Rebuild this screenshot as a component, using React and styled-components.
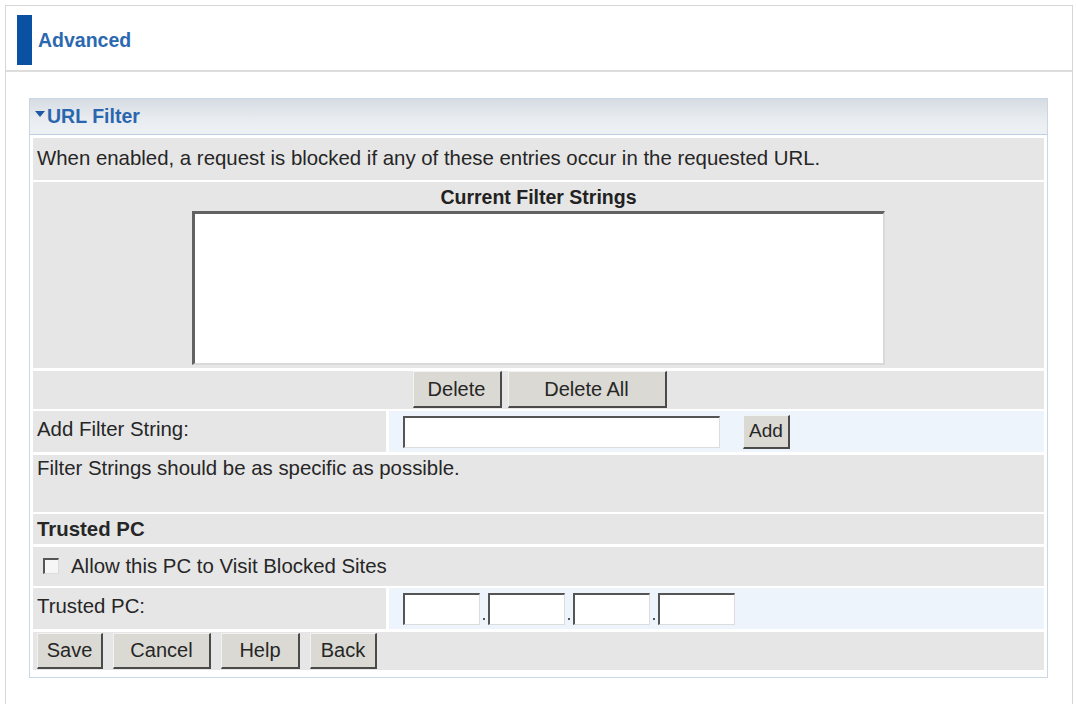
import React from "react";
import styled, { createGlobalStyle } from "styled-components";

const GlobalStyle = createGlobalStyle`
  html, body { margin: 0; padding: 0; background: #ffffff; overflow: hidden; }
  body { font-family: "Liberation Sans", Arial, sans-serif; color: #262626; }
  * { box-sizing: border-box; }
`;

const Frame = styled.div`
  margin: 5px 0 0 5px;
  width: 1068px;
  height: 710px;
  border: 1px solid #d6d6d6;
  background: #fff;
`;

const TitleBar = styled.div`
  display: flex;
  align-items: center;
  padding: 9px 0 5px 11px;
  border-bottom: 2px solid #dddddd;
`;

const TitleMark = styled.div`
  width: 15px;
  height: 50px;
  background: #0b51a3;
`;

const TitleText = styled.span`
  margin-left: 6px;
  font-size: 19.5px;
  font-weight: bold;
  color: #2b68b0;
`;

const Panel = styled.section`
  margin: 26px 0 0 23px;
  width: 1019px;
  border: 1px solid #c9d7e5;
`;

const PanelHeader = styled.div`
  display: flex;
  align-items: center;
  height: 36px;
  padding-left: 4px;
  background: linear-gradient(#d6dce3, #e9edf1 60%, #eef1f4);
  border-bottom: 1px solid #bdd0e3;
  font-size: 19.5px;
  font-weight: bold;
  color: #2a66ae;
`;

const Caret = styled.span`
  width: 0;
  height: 0;
  margin: 0 2px 0 1px;
  border-left: 5px solid transparent;
  border-right: 5px solid transparent;
  border-top: 6px solid #1d59a2;
  position: relative;
  top: -3px;
`;

const PanelBody = styled.div`
  display: flex;
  flex-direction: column;
  gap: 2.5px;
  padding: 2.5px 3px 7px 3px;
`;

const Row = styled.div`
  display: flex;
  align-items: ${(p) => p.$align || "center"};
  justify-content: ${(p) => p.$justify || "flex-start"};
  gap: ${(p) => p.$gap || "0px"};
  height: ${(p) => p.$h}px;
  padding: ${(p) => p.$pad || "0 4px"};
  background: #e6e6e6;
  font-size: 20.4px;
  font-weight: ${(p) => (p.$bold ? "bold" : "normal")};
`;

const SplitRow = styled.div`
  display: grid;
  grid-template-columns: 353px 1fr;
  gap: 3px;
  height: ${(p) => p.$h}px;
  font-size: 20.4px;
`;

const LabelCell = styled.div`
  display: flex;
  align-items: center;
  padding: 0 4px 4px 4px;
  background: #e6e6e6;
`;

const FieldCell = styled.div`
  display: flex;
  align-items: center;
  padding-left: 14px;
  background: #edf4fc;
  gap: ${(p) => p.$gap || "0px"};
`;

const ListSection = styled.div`
  display: flex;
  flex-direction: column;
  align-items: center;
  height: 186px;
  padding-top: 3px;
  background: #e6e6e6;
`;

const ListTitle = styled.div`
  height: 24px;
  line-height: 24px;
  margin-bottom: 2px;
  font-size: 19.5px;
  font-weight: bold;
  color: #222;
`;

const ListBox = styled.div`
  width: 693px;
  height: 154px;
  background: #fff;
  border-top: 3px solid #626262;
  border-left: 3px solid #626262;
  border-right: 2px solid #d9d9d9;
  border-bottom: 2px solid #d9d9d9;
`;

const Button = styled.button`
  height: ${(p) => p.$h || 37}px;
  width: ${(p) => p.$w}px;
  padding: 0;
  font-family: "Liberation Sans", Arial, sans-serif;
  font-size: ${(p) => p.$fs || 20}px;
  color: #262626;
  background: #dad9d3;
  border-top: 1px solid #f2f2f2;
  border-left: 1px solid #f2f2f2;
  border-right: 2px solid #4a4a4a;
  border-bottom: 2px solid #4a4a4a;
  border-radius: 0;
`;

const TextInput = styled.div`
  width: ${(p) => p.$w}px;
  height: 32px;
  background: #fff;
  border-top: 2px solid #555;
  border-left: 2px solid #555;
  border-right: 1px solid #dcdcdc;
  border-bottom: 1px solid #dcdcdc;
`;

const Dot = styled.span`
  align-self: flex-end;
  width: 2px;
  height: 2px;
  margin: 0 3px 9px 3px;
  background: #555;
`;

const CheckBox = styled.span`
  width: 16px;
  height: 16px;
  margin: 0 12px 0 10px;
  background: #f6f6f6;
  border-top: 2px solid #555;
  border-left: 2px solid #555;
  border-right: 1px solid #dcdcdc;
  border-bottom: 1px solid #dcdcdc;
`;

export default function App() {
  return (
    <>
      <GlobalStyle />
      <Frame>
        <TitleBar>
          <TitleMark />
          <TitleText>Advanced</TitleText>
        </TitleBar>
        <Panel>
          <PanelHeader>
            <Caret />
            URL Filter
          </PanelHeader>
          <PanelBody>
            <Row $h={42}>
              When enabled, a request is blocked if any of these entries occur in the requested URL.
            </Row>
            <ListSection>
              <ListTitle>Current Filter Strings</ListTitle>
              <ListBox />
            </ListSection>
            <Row $h={38} $justify="center" $gap="6px" $pad="0 0 0 2px">
              <Button $w={89}>Delete</Button>
              <Button $w={159}>Delete All</Button>
            </Row>
            <SplitRow $h={41}>
              <LabelCell>Add Filter String:</LabelCell>
              <FieldCell $gap="23px">
                <TextInput $w={317} />
                <Button $w={47} $h={34} $fs={19}>Add</Button>
              </FieldCell>
            </SplitRow>
            <Row $h={57} $align="flex-start" $pad="2px 4px 0 4px">
              Filter Strings should be as specific as possible.
            </Row>
            <Row $h={30} $bold>
              Trusted PC
            </Row>
            <Row $h={39} $pad="0">
              <CheckBox />
              Allow this PC to Visit Blocked Sites
            </Row>
            <SplitRow $h={41}>
              <LabelCell>Trusted PC:</LabelCell>
              <FieldCell>
                <TextInput $w={77} />
                <Dot />
                <TextInput $w={77} />
                <Dot />
                <TextInput $w={77} />
                <Dot />
                <TextInput $w={77} />
              </FieldCell>
            </SplitRow>
            <Row $h={38} $gap="10px" $pad="0 0 0 4px">
              <Button $w={66} $h={36}>Save</Button>
              <Button $w={98} $h={36}>Cancel</Button>
              <Button $w={79} $h={36}>Help</Button>
              <Button $w={67} $h={36}>Back</Button>
            </Row>
          </PanelBody>
        </Panel>
      </Frame>
    </>
  );
}
